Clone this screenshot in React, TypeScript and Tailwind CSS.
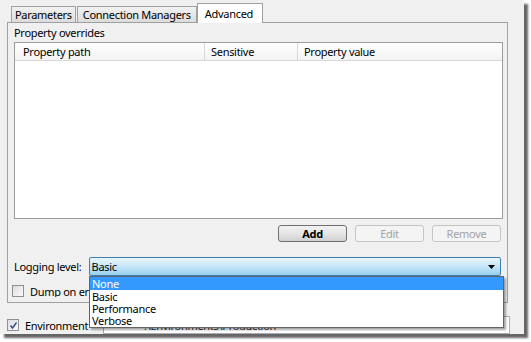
import React from "react";

const font = { fontFamily: '"Noto Sans", "Open Sans", sans-serif' };

function Checkbox({ checked }: { checked?: boolean }) {
  return (
    <div className="w-[12px] h-[12px] shrink-0 border border-[#8f8f8f] bg-gradient-to-br from-[#dcdcdc] to-[#fafafa] flex items-center justify-center">
      {checked && (
        <svg width="9" height="9" viewBox="0 0 9 9">
          <path d="M1.5 4.5 L3.5 7 L7.5 1.5" fill="none" stroke="#2b4c91" strokeWidth="1.4" />
        </svg>
      )}
    </div>
  );
}

export default function App() {
  return (
    <div className="w-[531px] h-[342px] bg-white overflow-hidden" style={font}>
      <div className="w-[524px] h-[334px] bg-[#f0f0f0] shadow-[4px_4px_2px_rgba(0,0,0,0.6)] relative text-[11px] tracking-[-0.3px] text-black leading-none">
        {/* tabs */}
        <div className="flex items-end h-[22px] pl-[11px]">
          <div className="h-[16px] pl-[3px] pr-[3px] border border-b-0 border-[#a0a0a0] bg-gradient-to-b from-[#f2f2f2] to-[#dcdcdc] flex items-center">Parameters</div>
          <div className="h-[16px] pl-[5px] pr-[5px] ml-[1px] border border-b-0 border-[#a0a0a0] bg-gradient-to-b from-[#f2f2f2] to-[#dcdcdc] flex items-center">Connection Managers</div>
          <div className="h-[20px] pl-[7px] pr-[9px] border border-b-0 border-[#a0a0a0] bg-white flex items-start pt-[4px] relative top-[1px] z-10">Advanced</div>
        </div>
        {/* panel */}
        <div className="ml-[7px] w-[501px] h-[281px] border border-[#a0a0a0] bg-[#f0f0f0] flex flex-col px-[6px]">
          <div className="h-[19px] flex items-center">Property overrides</div>
          <div className="w-[489px] h-[177px] border border-[#9c9c9c] bg-white flex flex-col">
            <div className="h-[18px] flex border-b border-[#d8d8d8] bg-gradient-to-b from-white to-[#f3f3f3]">
              <div className="w-[190px] pl-[8px] flex items-center border-r border-[#d8d8d8]">Property path</div>
              <div className="w-[93px] pl-[6px] flex items-center border-r border-[#d8d8d8]">Sensitive</div>
              <div className="flex-1 pl-[6px] flex items-center">Property value</div>
            </div>
          </div>
          <div className="flex justify-end gap-[8px] mt-[6px]">
            <div className="w-[69px] h-[17px] rounded-[3px] border border-[#707070] bg-gradient-to-b from-[#f2f2f2] via-[#e6e6e6] to-[#d0d0d0] flex items-center justify-center font-bold">Add</div>
            <div className="w-[69px] h-[17px] rounded-[3px] border border-[#c5c5c5] bg-[#f4f4f4] flex items-center justify-center text-[#a3a3a3]">Edit</div>
            <div className="w-[69px] h-[17px] rounded-[3px] border border-[#c5c5c5] bg-[#f4f4f4] flex items-center justify-center text-[#a3a3a3]">Remove</div>
          </div>
          <div className="flex items-center mt-[15px] h-[19px]">
            <div className="w-[75px]">Logging level:</div>
            <div className="w-[415px] h-[19px] rounded-[2px] border border-[#3c7fb1] bg-gradient-to-b from-[#eaf6fd] via-[#c4e5f6] to-[#98d1ef] flex items-center pl-[2px] pr-[5px] justify-between">
              <span>Basic</span>
              <svg width="7" height="4" viewBox="0 0 7 4"><path d="M0 0 H7 L3.5 4 Z" fill="#000" /></svg>
            </div>
          </div>
          <div className="flex items-center gap-[6px] mt-[9px] ml-[-2px]">
            <Checkbox />
            <span className="w-[59px] overflow-hidden whitespace-nowrap">Dump on errors</span>
          </div>
        </div>
        {/* environment row */}
        <div className="flex items-center mt-[13px] ml-[7px] h-[18px]">
          <Checkbox checked />
          <span className="ml-[6px] w-[78px]">Environment</span>
          <div className="w-[407px] h-[18px] border border-[#abadb3] bg-white flex items-center pl-[40px] text-[#333]">.\Environments\Production</div>
        </div>
        {/* dropdown list overlay */}
        <div className="absolute left-[89px] top-[276px] w-[415px] h-[52px] bg-white border border-[#646464] shadow-[2px_2px_2px_rgba(0,0,0,0.35)] z-20 flex flex-col">
          <div className="h-[13px] bg-[#3399ff] text-white pl-[2px] flex items-center">None</div>
          <div className="h-[12.5px] pl-[2px] flex items-center">Basic</div>
          <div className="h-[12.5px] pl-[2px] flex items-center">Performance</div>
          <div className="h-[12.5px] pl-[2px] flex items-center">Verbose</div>
        </div>
      </div>
    </div>
  );
}
